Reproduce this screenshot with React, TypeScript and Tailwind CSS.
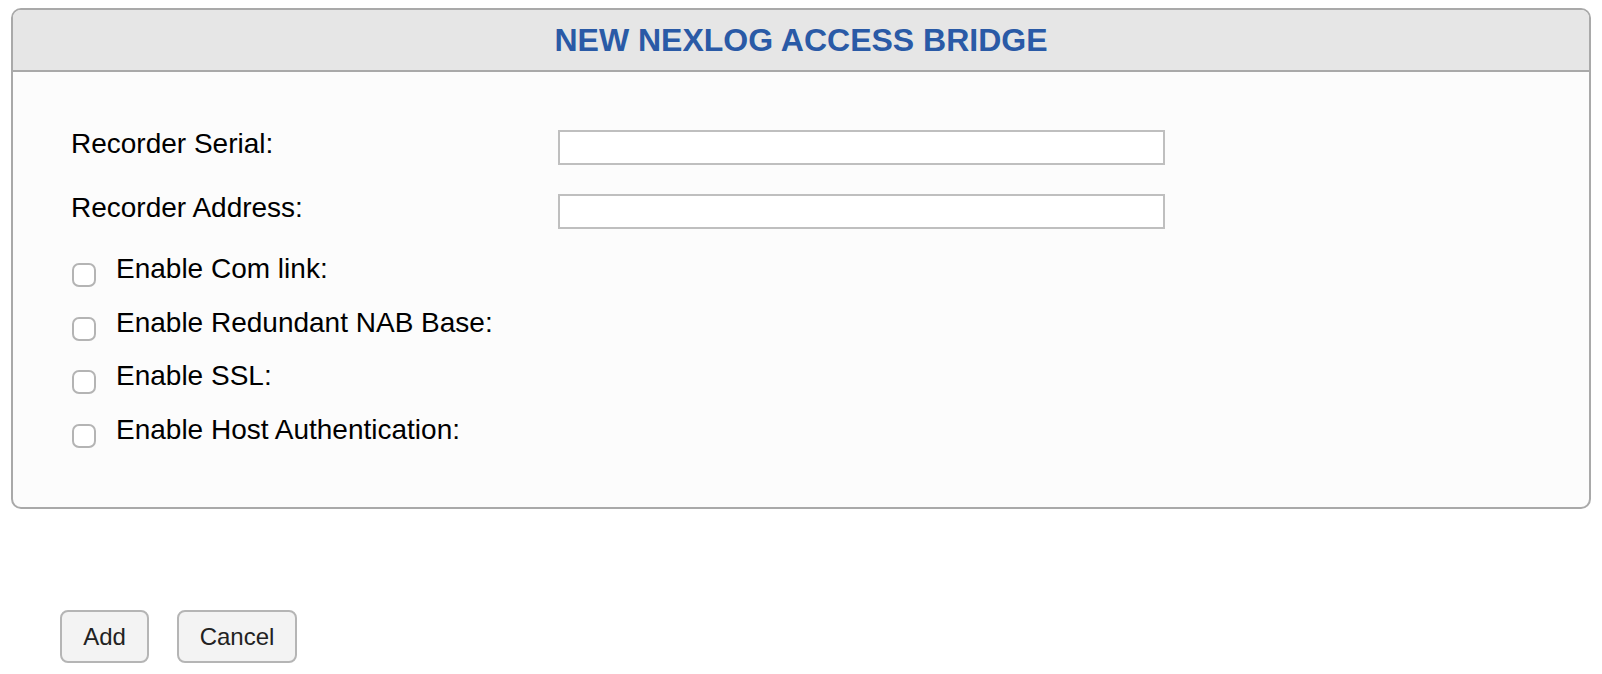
import React from "react";

const font = { fontFamily: '"Liberation Sans", Arial, Helvetica, sans-serif' };

const TextRow: React.FC<{ label: string }> = ({ label }) => (
  <div className="flex items-start">
    <div className="w-[487px] text-[28px] leading-[32px] text-black -mt-[2px]">{label}</div>
    <input
      type="text"
      className="w-[607px] h-[35px] bg-white border-2 border-[#bfbfbf] outline-none"
    />
  </div>
);

const CheckRow: React.FC<{ label: string }> = ({ label }) => (
  <div className="flex items-start h-[32px]">
    <span className="mt-[10px] ml-[1px] w-[24px] h-[24px] rounded-[7px] border-2 border-[#b4b4b4] bg-white shrink-0" />
    <span className="ml-[20px] text-[28px] leading-[32px] text-black">{label}</span>
  </div>
);

const App: React.FC = () => {
  const checks = [
    "Enable Com link:",
    "Enable Redundant NAB Base:",
    "Enable SSL:",
    "Enable Host Authentication:",
  ];

  return (
    <div className="min-h-[674px] bg-white pt-2" style={font}>
      <div className="mx-[11px] rounded-[10px] border-2 border-[#a9a9a9] overflow-hidden bg-[#fcfcfc]">
        <div className="h-[62px] flex items-center justify-center bg-[#e6e6e6] border-b-2 border-[#a9a9a9]">
          <h1 className="text-[32px] font-bold text-[#2a5aa6] leading-none">
            NEW NEXLOG ACCESS BRIDGE
          </h1>
        </div>
        <div className="pl-[58px] pt-[58px] pb-[61px]">
          <div className="flex flex-col gap-[29px]">
            <TextRow label="Recorder Serial:" />
            <TextRow label="Recorder Address:" />
          </div>
          <div className="flex flex-col gap-[21.7px] mt-[24px]">
            {checks.map((c) => (
              <CheckRow key={c} label={c} />
            ))}
          </div>
        </div>
      </div>
      <div className="flex gap-[28px] pl-[60px] mt-[101px]">
        <button className="w-[89px] h-[53px] rounded-[8px] border-2 border-[#b5b5b5] bg-[#f3f3f3] text-[24px] text-[#222]">
          Add
        </button>
        <button className="w-[120px] h-[53px] rounded-[8px] border-2 border-[#b5b5b5] bg-[#f3f3f3] text-[24px] text-[#222]">
          Cancel
        </button>
      </div>
    </div>
  );
};

export default App;
